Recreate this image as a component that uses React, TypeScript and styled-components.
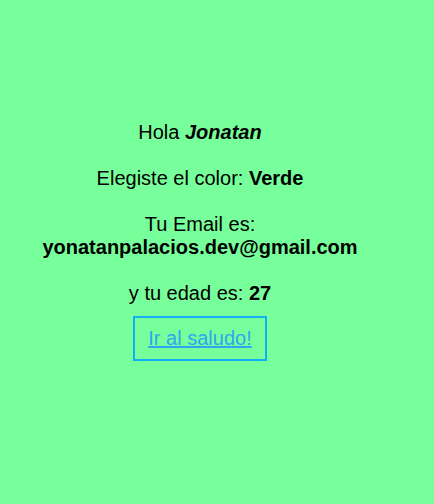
import React from "react";
import styled, { createGlobalStyle } from "styled-components";

const GlobalStyle = createGlobalStyle`
  html, body {
    margin: 0;
    padding: 0;
    background: #77ff9b;
  }
  body {
    font-family: "Liberation Sans", Arial, sans-serif;
    color: #000;
  }
`;

const Page = styled.div`
  width: 400px;
  min-height: 504px;
  display: flex;
  flex-direction: column;
  align-items: center;
  padding-top: 121px;
  box-sizing: border-box;
`;

const Line = styled.p<{ $last?: boolean }>`
  margin: 0 0 ${(p) => (p.$last ? "11px" : "23px")};
  font-size: 20px;
  line-height: 23px;
  text-align: center;
`;

const LinkBox = styled.div`
  border: 2px solid #10aef7;
  padding: 9px 13px;
  font-size: 20px;
  line-height: 23px;
`;

const Link = styled.a`
  color: #2ea6f2;
  text-decoration: underline;
  cursor: pointer;
`;

export default function App() {
  return (
    <>
      <GlobalStyle />
      <Page>
        <Line>
          Hola <b><i>Jonatan</i></b>
        </Line>
        <Line>
          Elegiste el color: <b>Verde</b>
        </Line>
        <Line>
          Tu Email es:
          <br />
          <b>yonatanpalacios.dev@gmail.com</b>
        </Line>
        <Line $last>
          y tu edad es: <b>27</b>
        </Line>
        <LinkBox>
          <Link href="#">Ir al saludo!</Link>
        </LinkBox>
      </Page>
    </>
  );
}
